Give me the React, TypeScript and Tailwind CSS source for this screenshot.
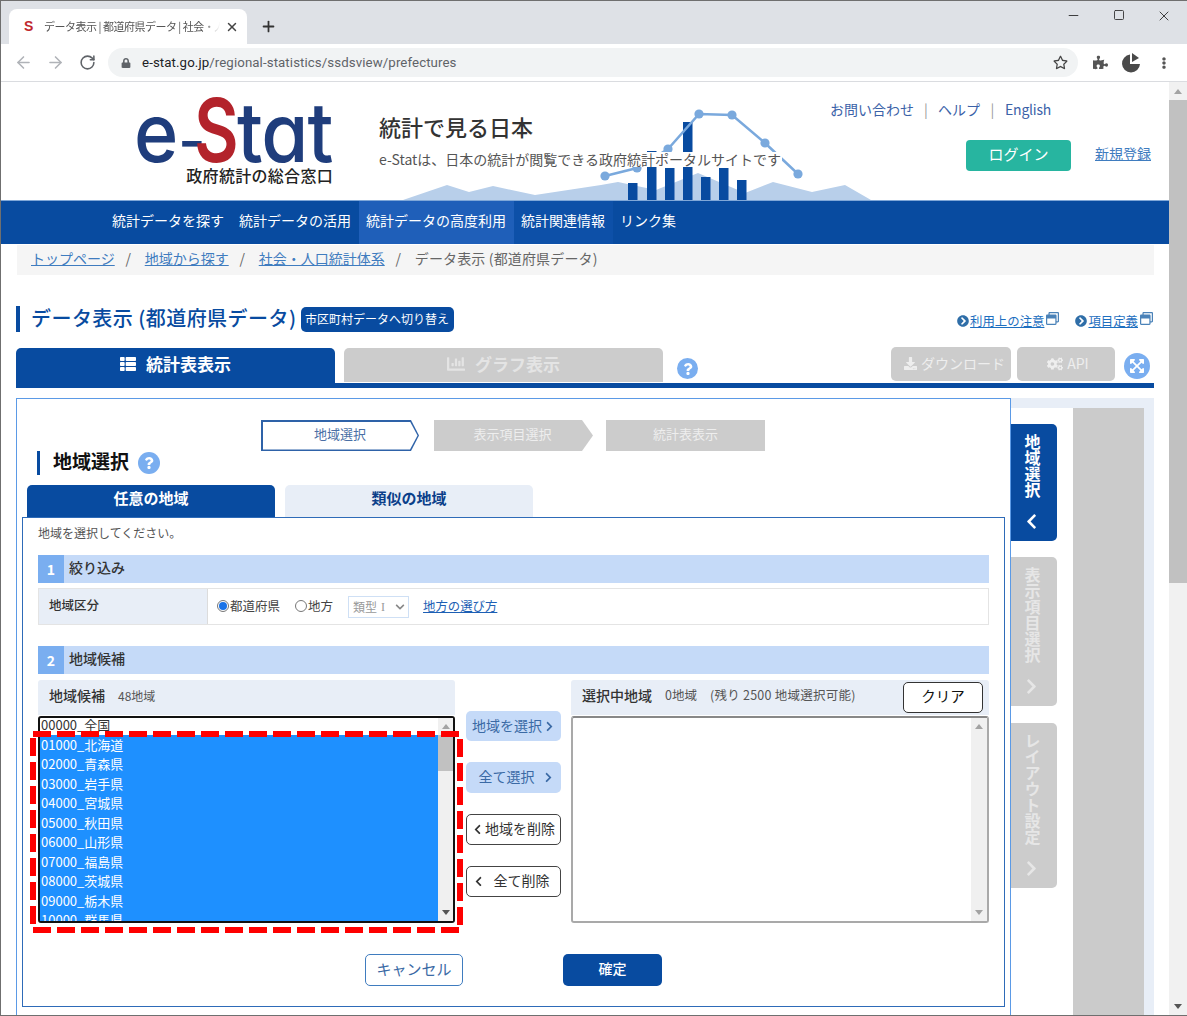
import {
  FaChartBar,
  FaChevronCircleRight,
  FaChevronLeft,
  FaChevronRight,
  FaCogs,
  FaDownload,
  FaEllipsisV,
  FaExpandArrowsAlt,
  FaLock,
  FaPuzzlePiece,
  FaQuestion,
  FaRegStar,
  FaRegWindowRestore,
  FaThList,
} from "react-icons/fa";
import { ArrowLeft, ArrowRight, Minus, Plus, RotateCw, Square, X } from "lucide-react";

const prefectures = [
  "01000_北海道",
  "02000_青森県",
  "03000_岩手県",
  "04000_宮城県",
  "05000_秋田県",
  "06000_山形県",
  "07000_福島県",
  "08000_茨城県",
  "09000_栃木県",
  "10000_群馬県",
];

const bars = [
  [627, 183],
  [646, 151],
  [664, 168],
  [682, 122],
  [700, 177],
  [718, 168],
  [736, 180],
];

const dots = [
  [604, 176],
  [636, 168],
  [667, 149],
  [698, 114],
  [731, 115],
  [764, 143],
  [797, 174],
];

const Illustration = () => (
  <svg className="absolute left-0 top-[-82px] pointer-events-none" width="900" height="200" viewBox="0 0 900 200">
    <polygon
      points="402,200 446,185 468,192 492,186 534,195 600,185 617,182 655,190 697,173 744,193 772,182 811,192 844,185 870,200"
      fill="#b8cfea"
    />
    {bars.map(([x, y]) => (
      <rect key={x} x={x} y={y} width="9.5" height={200 - y} fill="#084ba0" />
    ))}
    <polyline points={dots.map((d) => d.join(",")).join(" ")} fill="none" stroke="#7aa9dd" strokeWidth="2.5" />
    {dots.map(([x, y]) => (
      <circle key={x} cx={x} cy={y} r="4.6" fill="#7aa9dd" />
    ))}
  </svg>
);

const Logo = () => (
  <div className="w-[196px] pt-[16px]">
    <div className="flex items-baseline h-[64px] leading-[64px] text-[#1f3d7c] [font-family:Inter,sans-serif] [font-feature-settings:'cv11'] font-medium text-[82px] whitespace-nowrap">
      <span className="inline-block w-[44px] -ml-[3px] scale-x-[0.92] origin-left">e</span>
      <span className="inline-block w-[16px] text-[60px]">-</span>
      <span className="inline-block w-[43px] text-[88px] text-[#b3232b] scale-x-[0.78] origin-left font-semibold">S</span>
      <span className="inline-block scale-x-[0.93] origin-left tracking-[-1px]">tat</span>
    </div>
    <div className="mt-[1px] -ml-px text-[16px] leading-[24px] font-medium text-[#222] text-right tracking-[0.3px] whitespace-nowrap">
      政府統計の総合窓口
    </div>
  </div>
);

const BrowserChrome = () => (
  <>
    <div className="h-[43px] bg-[#dee1e6] flex items-end pl-[8px] relative">
      <div className="w-[238px] h-[35px] bg-white rounded-t-[8px] flex items-center pl-[15px]">
        <span className="w-[20px] text-[14px] font-bold text-[#c0272d] [font-family:'Liberation_Sans',sans-serif]">S</span>
        <span className="w-[176px] text-[11px] tracking-[-0.5px] text-[#555] whitespace-nowrap overflow-hidden [mask-image:linear-gradient(to_right,black_90%,transparent)]">
          データ表示 | 都道府県データ | 社会・人口統計体系
        </span>
        <X size={14} strokeWidth={2.5} className="ml-[5px] text-[#444]" />
      </div>
      <Plus size={17} strokeWidth={2.5} className="ml-[13px] mb-[9px] text-[#333]" />
      <div className="ml-auto h-full flex items-start pt-[7px] pr-[15px] text-[#333]">
        <Minus size={15} strokeWidth={1.5} />
        <Square size={12} strokeWidth={1.8} className="ml-[32px] mt-[1px]" />
        <X size={16} strokeWidth={1.4} className="ml-[31px]" />
      </div>
    </div>
    <div className="h-[38px] bg-white border-b border-[#dadce0] flex items-center pl-[13px]">
      <ArrowLeft size={19} className="text-[#b0b3b8]" />
      <ArrowRight size={19} className="ml-[13px] text-[#b0b3b8]" />
      <RotateCw size={17} strokeWidth={2.2} className="ml-[14px] text-[#5f6368]" />
      <div className="ml-[12px] w-[970px] h-[29px] rounded-full bg-[#f1f3f4] flex items-center pl-[13px] pr-[10px]">
        <FaLock size={10} className="text-[#5f6368]" />
        <span className="ml-[11px] text-[13.25px] tracking-[0.1px] [font-family:Roboto,sans-serif] text-[#202124]">
          e-stat.go.jp<span className="text-[#5f6368]">/regional-statistics/ssdsview/prefectures</span>
        </span>
        <FaRegStar size={15} className="ml-auto text-[#444]" />
      </div>
      <FaPuzzlePiece size={15} className="ml-[15px] text-[#555]" />
      <svg className="ml-[12px]" width="22" height="22" viewBox="0 0 22 22">
        <path d="M10 2.5 A9 9 0 1 0 20 12 L10 12 Z" fill="#4a4a4a" />
        <path d="M12 1 L19 6 L12 10 Z" fill="#4a4a4a" />
      </svg>
      <FaEllipsisV size={12} className="ml-[16px] text-[#555]" />
    </div>
  </>
);

const SiteHeader = () => (
  <div className="h-[118px] relative flex pl-[136px]">
    <Illustration />
    <Logo />
    <div className="ml-[46px] pt-[31px] relative">
      <div className="text-[22px] leading-[26px] font-medium text-[#333]">統計で見る日本</div>
      <div className="mt-[13px] text-[14px] leading-[15px] text-[#555] bg-white w-[403px] whitespace-nowrap">
        e-Statは、日本の統計が閲覧できる政府統計ポータルサイトです
      </div>
    </div>
    <div className="absolute left-[829px] top-[17px] w-[322px]">
      <div className="flex items-center h-[20px] text-[14px] text-[#3b62a8] whitespace-nowrap">
        <span>お問い合わせ</span>
        <span className="w-[24px] text-center text-[#999]">|</span>
        <span>ヘルプ</span>
        <span className="w-[25px] text-center text-[#999]">|</span>
        <span className="tracking-[-0.2px]">English</span>
      </div>
      <div className="mt-[21px] flex items-start">
        <div className="ml-[136px] w-[105px] h-[31px] rounded-[4px] bg-[#27b5a0] text-white text-[15px] flex items-center justify-center pb-[2px]">
          ログイン
        </div>
        <span className="ml-[24px] text-[14px] leading-[26px] underline text-[#3f7cbf]">新規登録</span>
      </div>
    </div>
  </div>
);

const NavBar = () => (
  <div className="h-[44px] bg-[#084ba0] border-t border-[#7fa7d8] flex pl-[104px] gap-px text-[14px] text-white">
    <div className="px-[7px] pb-[4px] flex items-center">統計データを探す</div>
    <div className="px-[7px] pb-[4px] flex items-center">統計データの活用</div>
    <div className="px-[7px] pb-[4px] flex items-center bg-[#1f5fb9] w-[155px]">統計データの高度利用</div>
    <div className="px-[7px] pb-[4px] flex items-center bg-[#0d50a8] -ml-px w-[99px]">統計関連情報</div>
    <div className="pl-[6px] pb-[4px] flex items-center">リンク集</div>
  </div>
);

const Breadcrumb = () => (
  <div className="mt-px ml-[16px] w-[1137px] h-[30px] bg-[#f5f5f5] flex items-center pl-[14px] pb-[3px] text-[14px] whitespace-nowrap">
    <span className="underline text-[#3f7cbf]">トップページ</span>
    <span className="w-[30px] pr-[3px] text-center text-[#666]">/</span>
    <span className="underline text-[#3f7cbf]">地域から探す</span>
    <span className="w-[30px] pr-[3px] text-center text-[#666]">/</span>
    <span className="underline text-[#3f7cbf]">社会・人口統計体系</span>
    <span className="w-[30px] pr-[3px] text-center text-[#666]">/</span>
    <span className="text-[#666] tracking-[0.15px]">データ表示 (都道府県データ)</span>
  </div>
);

const ExternalLink = ({ label }: { label: string }) => (
  <div className="flex items-center text-[12.4px] text-[#1d6fc0] whitespace-nowrap">
    <FaChevronCircleRight size={12} className="text-[#2f6ea8] mr-px" />
    <span className="underline">{label}</span>
    <FaRegWindowRestore size={13} className="ml-[2px] -mt-[4px] text-[#4a82b8]" />
  </div>
);

const TitleRow = () => (
  <div className="mt-[31px] ml-[15px] w-[1138px] h-[26px] flex items-center">
    <div className="w-[4px] h-[26px] bg-[#084ba0]" />
    <h1 className="ml-[11px] pb-[2px] text-[20px] tracking-[0.45px] font-medium text-[#084ba0] whitespace-nowrap">データ表示 (都道府県データ)</h1>
    <div className="ml-[4px] w-[153px] h-[25px] rounded-[5px] bg-[#084ba0] text-white text-[12px] flex items-center justify-center whitespace-nowrap">
      市区町村データへ切り替え
    </div>
    <div className="ml-auto mt-[4px] flex gap-[16px] pr-[1px]">
      <ExternalLink label="利用上の注意" />
      <ExternalLink label="項目定義" />
    </div>
  </div>
);

const HelpIcon = ({ size }: { size: string }) => (
  <div className={`${size} rounded-full bg-[#7aaef0] text-white flex items-center justify-center`}>
    <FaQuestion size={12} />
  </div>
);

const TabRow = () => (
  <div className="mt-[16px] ml-[15px] w-[1138px] h-[40px] border-b-[5px] border-[#084ba0] flex items-start">
    <div className="w-[319px] h-[35px] pb-[3px] bg-[#084ba0] rounded-t-[5px] text-white text-[17px] font-bold flex items-center justify-center gap-[10px]">
      <FaThList size={16} />
      統計表表示
    </div>
    <div className="ml-[9px] w-[319px] h-[34px] pb-[3px] bg-[#cccccc] rounded-t-[5px] text-[#e4e4e4] text-[17px] font-bold flex items-center justify-center gap-[10px]">
      <FaChartBar size={18} />
      グラフ表示
    </div>
    <div className="ml-[14px] mt-[10px]">
      <HelpIcon size="w-[21px] h-[21px]" />
    </div>
    <div className="ml-auto -mt-px h-[34px] w-[120px] pl-[7px] pb-[2px] bg-[#cccccc] rounded-[5px] text-[#eeeeee] text-[14px] flex items-center justify-center gap-[4px] whitespace-nowrap">
      <FaDownload size={13} />
      ダウンロード
    </div>
    <div className="ml-[6px] -mt-px h-[34px] w-[98px] pl-[4px] pb-[1px] bg-[#cccccc] rounded-[5px] text-[#eeeeee] text-[14px] flex items-center justify-center gap-[4px]">
      <FaCogs size={16} />
      API
    </div>
    <div className="ml-[9px] mr-[4px] mt-[5px] w-[26px] h-[26px] rounded-full bg-[#7aaef0] text-white flex items-center justify-center">
      <FaExpandArrowsAlt size={16} />
    </div>
  </div>
);

const Stepper = () => (
  <div className="ml-[243px] flex gap-[13px] h-[31px] text-[13px]">
    <div className="w-[158px] h-[31px] bg-[#2e62a8] [clip-path:polygon(0_0,150px_0,158px_50%,150px_100%,0_100%)] relative">
      <div className="absolute left-[1.5px] top-[1.5px] w-[155px] h-[28px] pb-[3px] bg-white [clip-path:polygon(0_0,147.5px_0,155px_50%,147.5px_100%,0_100%)] flex items-center justify-center text-[#4a6fa5]">
        地域選択
      </div>
    </div>
    <div className="ml-[2px] w-[159px] h-[31px] pb-[3px] bg-[#cccccc] [clip-path:polygon(0_0,148px_0,159px_50%,148px_100%,0_100%)] flex items-center justify-center text-[#eeeeee] pr-[2px]">
      表示項目選択
    </div>
    <div className="w-[159px] h-[31px] pb-[3px] bg-[#cccccc] flex items-center justify-center text-[#eeeeee]">統計表表示</div>
  </div>
);

const SectionHead = ({ num, title }: { num: string; title: string }) => (
  <div className="h-[28px] bg-[#c5daf8] flex items-center text-[14px] font-medium text-[#333]">
    <div className="w-[26px] h-full bg-[#7aaef0] text-white font-bold text-[14px] flex items-center justify-center">{num}</div>
    <span className="ml-[5px] pb-[3px]">{title}</span>
  </div>
);

const Radio = ({ checked }: { checked?: boolean }) => (
  <div className="w-[12px] h-[12px] -mt-[2px] rounded-full border border-[#777] flex items-center justify-center bg-white">
    {checked && <div className="w-[8px] h-[8px] rounded-full bg-[#1a73e8]" />}
  </div>
);

const FilterRow = () => (
  <div className="mt-[5px] h-[37px] border border-[#e4e4e4] flex items-center text-[12px] text-[#444]">
    <div className="w-[169px] h-full pb-[2px] bg-[#e8eef7] border-r border-[#dcdcdc] pl-[10px] flex items-center font-medium text-[12.5px] text-[#333]">
      地域区分
    </div>
    <div className="ml-[9px] flex items-center">
      <Radio checked />
      <span className="ml-px text-[12.5px]">都道府県</span>
      <div className="ml-[15px]">
        <Radio />
      </div>
      <span className="ml-px text-[12.5px]">地方</span>
      <div className="ml-[15px] w-[61px] h-[22px] border border-[#cfe0f5] flex items-center pl-[4px] text-[#999] whitespace-nowrap">
        類型
        <span className="ml-[4px] [font-family:'Liberation_Serif',serif]">I</span>
        <FaChevronLeft size={10} className="ml-[10px] -rotate-90 text-[#888]" />
      </div>
      <span className="ml-[14px] text-[#1d5fb4] underline text-[12.4px]">地方の選び方</span>
    </div>
  </div>
);

const Arrow = ({ up, color }: { up?: boolean; color: string }) => (
  <div
    className={`w-0 h-0 border-x-[4px] border-x-transparent ${up ? "border-b-[5px]" : "border-t-[5px]"} ${color}`}
  />
);

const RegionList = () => (
  <div className="relative mt-px h-[207px] border-2 border-[#111] rounded-[3px] bg-white flex overflow-visible">
    <div className="flex-1 overflow-hidden text-[13px] whitespace-nowrap">
      <div className="-mt-[3px]">
        <div className="h-[19.55px] leading-[19.55px] pl-[1px] text-[#333]">00000_全国</div>
        {prefectures.map((p) => (
          <div key={p} className="h-[19.55px] leading-[19.55px] pl-[1px] bg-[#1e90ff] text-white">
            {p}
          </div>
        ))}
      </div>
    </div>
    <div className="w-[15px] bg-[#f0f0f0] flex flex-col items-center">
      <div className="h-[17px] flex items-center justify-center">
        <Arrow up color="border-b-[#a3a3a3]" />
      </div>
      <div className="w-full h-[36px] bg-[#c1c1c1]" />
      <div className="mt-auto h-[17px] flex items-center justify-center">
        <Arrow color="border-t-[#555]" />
      </div>
    </div>
    {/* red annotation frame */}
    <svg className="absolute left-[-10px] top-[13px]" width="433" height="202" viewBox="0 0 433 202">
      <rect x="3" y="3" width="427" height="196" fill="none" stroke="#fe0000" strokeWidth="6" strokeDasharray="18 6" />
    </svg>
  </div>
);

const SelectedList = () => (
  <div className="mt-px h-[207px] border-2 border-[#a9a9a9] border-t-[#888] rounded-[3px] bg-white flex justify-end">
    <div className="w-[16px] bg-[#f0f0f0] flex flex-col items-center">
      <div className="h-[17px] flex items-center justify-center">
        <Arrow up color="border-b-[#a3a3a3]" />
      </div>
      <div className="mt-auto h-[17px] flex items-center justify-center">
        <Arrow color="border-t-[#a3a3a3]" />
      </div>
    </div>
  </div>
);

const MoveButtons = () => (
  <div className="ml-[11px] w-[95px] pt-[31px] flex flex-col gap-[21px] text-[14px] whitespace-nowrap">
    <div className="h-[30px] pb-[2px] rounded-[5px] bg-[#c5daf8] text-[#3b6aa5] flex items-center justify-center gap-[2px]">
      地域を選択
      <FaChevronRight size={11} className="mt-[2px]" />
    </div>
    <div className="h-[31px] pb-[2px] rounded-[5px] bg-[#c5daf8] text-[#3b6aa5] flex items-center justify-center gap-[8px] pl-[5px]">
      全て選択
      <FaChevronRight size={11} className="mt-[2px]" />
    </div>
    <div className="h-[31px] pb-[2px] rounded-[5px] bg-white border border-[#444] text-[#333] flex items-center justify-center gap-[2px]">
      <FaChevronLeft size={11} className="mt-[2px]" />
      地域を削除
    </div>
    <div className="h-[31px] pb-[2px] rounded-[5px] bg-white border border-[#444] text-[#333] flex items-center justify-center gap-[10px] pr-[5px]">
      <FaChevronLeft size={11} className="mt-[2px]" />
      全て削除
    </div>
  </div>
);

const RegionPicker = () => (
  <div className="mt-[6px] flex h-[243px]">
    <div className="w-[417px] shrink-0">
      <div className="h-[35px] pb-[4px] bg-[#e8eef7] rounded-t-[3px] flex items-center pl-[11px] whitespace-nowrap">
        <span className="text-[14px] font-medium text-[#333]">地域候補</span>
        <span className="ml-[13px] text-[12px] text-[#555]">48地域</span>
      </div>
      <RegionList />
    </div>
    <MoveButtons />
    <div className="ml-[10px] w-[418px] shrink-0">
      <div className="h-[35px] bg-[#e8eef7] rounded-t-[3px] flex items-center pl-[11px] pr-[6px] whitespace-nowrap">
        <span className="text-[14px] font-medium text-[#333] pb-[4px]">選択中地域</span>
        <span className="ml-[13px] text-[12.5px] text-[#555] pb-[4px]">0地域</span>
        <span className="ml-[13px] text-[12.5px] tracking-[0.25px] text-[#555] pb-[4px]">(残り 2500 地域選択可能)</span>
        <div className="ml-auto w-[80px] h-[31px] pb-[3px] rounded-[5px] bg-white border border-[#333] text-[14.5px] text-[#111] flex items-center justify-center">
          クリア
        </div>
      </div>
      <SelectedList />
    </div>
  </div>
);

const SelectPanel = () => (
  <div className="w-[995px] shrink-0 bg-white border border-[#5b9ae6] pt-[21px] pl-px">
    <Stepper />
    <div className="ml-[19px] h-[24px] flex items-center">
      <div className="w-[3px] h-[24px] bg-[#084ba0]" />
      <h2 className="ml-[13px] pb-[4px] text-[19px] font-bold text-[#111] leading-[24px]">地域選択</h2>
      <div className="ml-[9px]">
        <HelpIcon size="w-[22px] h-[22px]" />
      </div>
    </div>
    <div className="mt-[10px] ml-[9px] flex gap-[10px] text-[15px] font-bold">
      <div className="w-[248px] h-[32px] pb-[5px] bg-[#084ba0] rounded-t-[5px] text-white flex items-center justify-center">任意の地域</div>
      <div className="w-[248px] h-[32px] pb-[5px] bg-[#e8eef7] rounded-t-[5px] text-[#0b3f8a] flex items-center justify-center">類似の地域</div>
    </div>
    <div className="ml-[4px] w-[983px] h-[490px] border border-[#2e6bb8] px-[15px]">
      <div className="mt-[7px] h-[16px] text-[12px] leading-[16px] text-[#555]">地域を選択してください。</div>
      <div className="mt-[14px]">
        <SectionHead num="1" title="絞り込み" />
      </div>
      <FilterRow />
      <div className="mt-[21px]">
        <SectionHead num="2" title="地域候補" />
      </div>
      <RegionPicker />
      <div className="mt-[31px] ml-[327px] flex gap-[100px]">
        <div className="w-[98px] h-[32px] pb-[2px] rounded-[5px] border border-[#3f7cbf] text-[#3b6aa5] text-[15px] flex items-center justify-center">キャンセル</div>
        <div className="w-[99px] h-[32px] pb-[3px] rounded-[5px] bg-[#084ba0] text-white text-[14px] font-medium flex items-center justify-center">確定</div>
      </div>
    </div>
  </div>
);

const SideTab = ({ label, active, height, left }: { label: string; active?: boolean; height: string; left?: boolean }) => (
  <div
    className={`${height} w-[46px] rounded-r-[5px] flex flex-col items-center pt-[10px] pr-[3px] ${active ? "bg-[#084ba0] text-white" : "bg-[#cccccc] text-[#e6e6e6]"}`}
  >
    <span className="[writing-mode:vertical-rl] text-[16px] leading-[16px] font-bold">{label}</span>
    <div className="mt-auto mb-[11px] -ml-[3px]">{left ? <FaChevronLeft size={17} /> : <FaChevronRight size={17} />}</div>
  </div>
);

const SideColumn = () => (
  <div className="flex-1 pt-[10px] pr-[10px] flex">
    <div className="w-[62px] bg-white pt-[16px] flex flex-col">
      <SideTab label="地域選択" active left height="h-[117px]" />
      <div className="mt-[16px]">
        <SideTab label="表示項目選択" height="h-[149px]" />
      </div>
      <div className="mt-[17px]">
        <SideTab label="レイアウト設定" height="h-[165px]" />
      </div>
    </div>
    <div className="flex-1 bg-[#cbcbcb]" />
  </div>
);

const PageScrollbar = () => (
  <div className="w-[18px] bg-[#f1f1f1] flex flex-col items-center">
    <div className="h-[18px] flex items-center justify-center">
      <Arrow up color="border-b-[#a3a3a3]" />
    </div>
    <div className="w-full h-[483px] bg-[#c1c1c1]" />
    <div className="mt-auto h-[18px] flex items-center justify-center">
      <Arrow color="border-t-[#555]" />
    </div>
  </div>
);

export default function App() {
  return (
    <div className="w-[1187px] h-[1016px] overflow-hidden bg-white border-l border-t border-b border-[#6f6f6f] [font-family:'Noto_Sans_CJK_JP','Noto_Sans',sans-serif]">
      <BrowserChrome />
      <div className="flex h-[933px]">
        <div className="w-[1168px] overflow-hidden">
          <SiteHeader />
          <NavBar />
          <Breadcrumb />
          <TitleRow />
          <TabRow />
          <div className="mt-[10px] ml-[15px] w-[1138px] h-[700px] bg-[#e8eef7] flex">
            <SelectPanel />
            <SideColumn />
          </div>
        </div>
        <PageScrollbar />
      </div>
    </div>
  );
}
